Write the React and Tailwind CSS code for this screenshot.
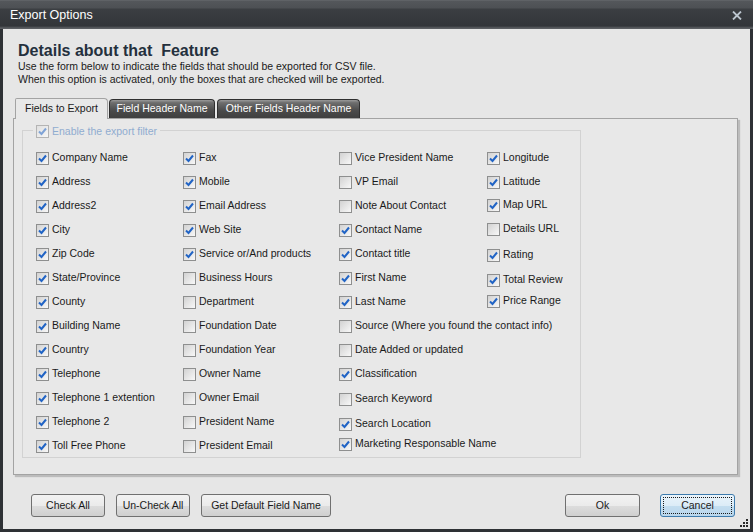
import React from 'react';

const font = { fontFamily: '"Liberation Sans", Arial, sans-serif' };

const CheckMark = ({ faded }) => (
    <svg viewBox="0 0 9 9" className="w-[9px] h-[9px]">
        <path d="M1 4.5 L3.5 7 L8 1.5" fill="none" stroke={faded ? '#7fa3d6' : '#2164c5'} strokeWidth="2" />
    </svg>
);

const Box = ({ on, faded }) => (
    <span
        className={
            'w-[13px] h-[13px] shrink-0 flex items-center justify-center border ' +
            (faded
                ? 'border-[#b4b4b4] bg-[linear-gradient(135deg,#e0e0e0,#f6f6f6)]'
                : 'border-[#8e8f8f] bg-[linear-gradient(135deg,#d2d2d2,#f8f8f8)]')
        }
    >
        {on && <CheckMark faded={faded} />}
    </span>
);

const Item = ({ label, on, cls = '' }) => (
    <div className={'h-[24px] flex items-center gap-[3px] text-[10.5px] text-[#1a1a1a] whitespace-nowrap ' + cls}>
        <Box on={on} />
        <span>{label}</span>
    </div>
);

const columns = [
    {
        w: 'w-[147px]',
        items: [
            ['Company Name', 1], ['Address', 1], ['Address2', 1], ['City', 1], ['Zip Code', 1],
            ['State/Province', 1], ['County', 1], ['Building Name', 1], ['Country', 1], ['Telephone', 1],
            ['Telephone 1 extention', 1], ['Telephone 2', 1], ['Toll Free Phone', 1],
        ],
    },
    {
        w: 'w-[156px]',
        items: [
            ['Fax', 1], ['Mobile', 1], ['Email Address', 1], ['Web Site', 1], ['Service or/And products', 1],
            ['Business Hours', 0], ['Department', 0], ['Foundation Date', 0], ['Foundation Year', 0], ['Owner Name', 0],
            ['Owner Email', 0], ['President Name', 0], ['President Email', 0],
        ],
    },
    {
        w: 'w-[148px]',
        items: [
            ['Vice President Name', 0], ['VP Email', 0], ['Note About Contact', 0], ['Contact Name', 1], ['Contact title', 1],
            ['First Name', 1], ['Last Name', 1], ['Source (Where you found the contact info)', 0], ['Date Added or updated', 0],
            ['Classification', 1], ['Search Keyword', 0, 'mt-[1px]'], ['Search Location', 1, 'mt-[1px]'],
            ['Marketing Responsable Name', 1, '!h-[16px]'],
        ],
    },
    {
        w: 'w-[80px]',
        items: [
            ['Longitude', 1], ['Latitude', 1], ['Map URL', 1, '-mt-[1px]'], ['Details URL', 0], ['Rating', 1, 'mt-[2px]'],
            ['Total Review', 1, 'mt-[1px]'], ['Price Range', 1, '-mt-[3px]'],
        ],
    },
];

const Button = ({ children, w, focus }) => (
    <button
        className={
            'h-[23px] rounded-[3px] border text-[10.5px] text-[#1a1a1a] flex items-center justify-center p-[2px] ' +
            w +
            (focus
                ? ' border-[#3d7bad] bg-[linear-gradient(#eaf4fb_0%,#dcecf7_50%,#c4def0_51%,#b9d6ec_100%)]'
                : ' border-[#707070] bg-[linear-gradient(#f2f2f2_0%,#ebebeb_50%,#dddddd_51%,#cfcfcf_100%)]')
        }
    >
        <span
            className={
                'w-full h-full flex items-center justify-center ' +
                (focus ? 'border border-dotted border-[#1a1a1a]' : '')
            }
        >
            {children}
        </span>
    </button>
);

export default function App() {
    return (
        <div style={font} className="w-[753px] h-[532px] bg-[#2e3135] flex flex-col overflow-hidden">
            {/* Title bar */}
            <div className="h-[29px] shrink-0 flex items-center justify-between pl-[10px] pr-[11px] pt-[2px] bg-[linear-gradient(#6a6d71_0px,#54575b_1px,#4d5054_8px,#3b3e42_9px,#33363a_26px,#5b5e62_28px)]">
                <span className="text-white text-[12.5px]">Export Options</span>
                <svg viewBox="0 0 10 9" className="w-[10px] h-[9px]">
                    <path d="M1 0.5 L9 8.5 M9 0.5 L1 8.5" stroke="#bcc6cf" strokeWidth="1.8" />
                </svg>
            </div>

            {/* Body */}
            <div className="flex-1 mx-[3px] mb-[3px] bg-[#e6e6e6] flex flex-col relative">
                <div className="px-[15px] pt-[12px] text-[10.5px] text-[#1a1a1a] leading-[13px]">
                    <h1 className="text-[16px] font-bold text-[#24303d] leading-[19px] whitespace-pre">Details about that  Feature</h1>
                    <p>Use the form below to indicate the fields that should be exported for CSV file.</p>
                    <p>When this option is activated, only the boxes that are checked will be exported.</p>
                </div>

                {/* Tabs */}
                <div className="flex items-end ml-[12px] mt-[10px] h-[22px] text-[10.5px] relative z-10">
                    <div className="w-[93px] h-[21px] -mb-[1px] bg-[#e8e8e8] border border-[#a3a3a3] border-b-0 rounded-tr-[4px] rounded-tl-[2px] flex items-center justify-center text-[#1a1a1a]">
                        Fields to Export
                    </div>
                    <div className="w-[106px] h-[19px] ml-[1px] bg-[linear-gradient(#9a9a9a_0%,#6e6e6e_15%,#4a4a4a_60%,#3f3f3f_100%)] border border-[#2f2f2f] border-b-0 rounded-t-[4px] flex items-center justify-center text-white">
                        Field Header Name
                    </div>
                    <div className="w-[143px] h-[19px] ml-[2px] bg-[linear-gradient(#9a9a9a_0%,#6e6e6e_15%,#4a4a4a_60%,#3f3f3f_100%)] border border-[#2f2f2f] border-b-0 rounded-t-[4px] flex items-center justify-center text-white">
                        Other Fields Header Name
                    </div>
                </div>

                {/* Tab panel */}
                <div className="ml-[10px] mr-[12px] h-[357px] border border-[#a3a3a3] bg-[#e8e8e8] shadow-[2px_2px_1px_rgba(0,0,0,0.18)] pt-[11px] pl-[8px]">
                    <div className="relative w-[559px] h-[328px] border border-[#d2d2d2] pl-[13px] pt-[15px]">
                        <div className="absolute -top-[7px] left-[10px] px-[3px] bg-[#e8e8e8] flex items-center gap-[3px] text-[10.5px] text-[#90acd0]">
                            <Box on faded />
                            <span>Enable the export filter</span>
                        </div>
                        <div className="flex">
                            {columns.map((col, i) => (
                                <div key={i} className={'flex flex-col ' + col.w}>
                                    {col.items.map(([label, on, cls]) => (
                                        <Item key={label} label={label} on={!!on} cls={cls} />
                                    ))}
                                </div>
                            ))}
                        </div>
                    </div>
                </div>

                {/* Buttons */}
                <div className="flex items-center mt-[19px] ml-[28px] mr-[15px]">
                    <div className="flex gap-[11px]">
                        <Button w="w-[74px]">Check All</Button>
                        <Button w="w-[74px]">Un-Check All</Button>
                        <Button w="w-[130px]">Get Default Field Name</Button>
                    </div>
                    <div className="flex gap-[20px] ml-auto">
                        <Button w="w-[75px]">Ok</Button>
                        <Button w="w-[75px]" focus>Cancel</Button>
                    </div>
                </div>

                {/* Resize grip */}
                <svg viewBox="0 0 9 9" className="absolute right-[1px] bottom-[1px] w-[9px] h-[9px]">
                    <g fill="#2a2a2a">
                        <rect x="6" y="0" width="2" height="2" />
                        <rect x="3" y="3" width="2" height="2" />
                        <rect x="6" y="3" width="2" height="2" />
                        <rect x="0" y="6" width="2" height="2" />
                        <rect x="3" y="6" width="2" height="2" />
                        <rect x="6" y="6" width="2" height="2" />
                    </g>
                </svg>
            </div>
        </div>
    );
}
